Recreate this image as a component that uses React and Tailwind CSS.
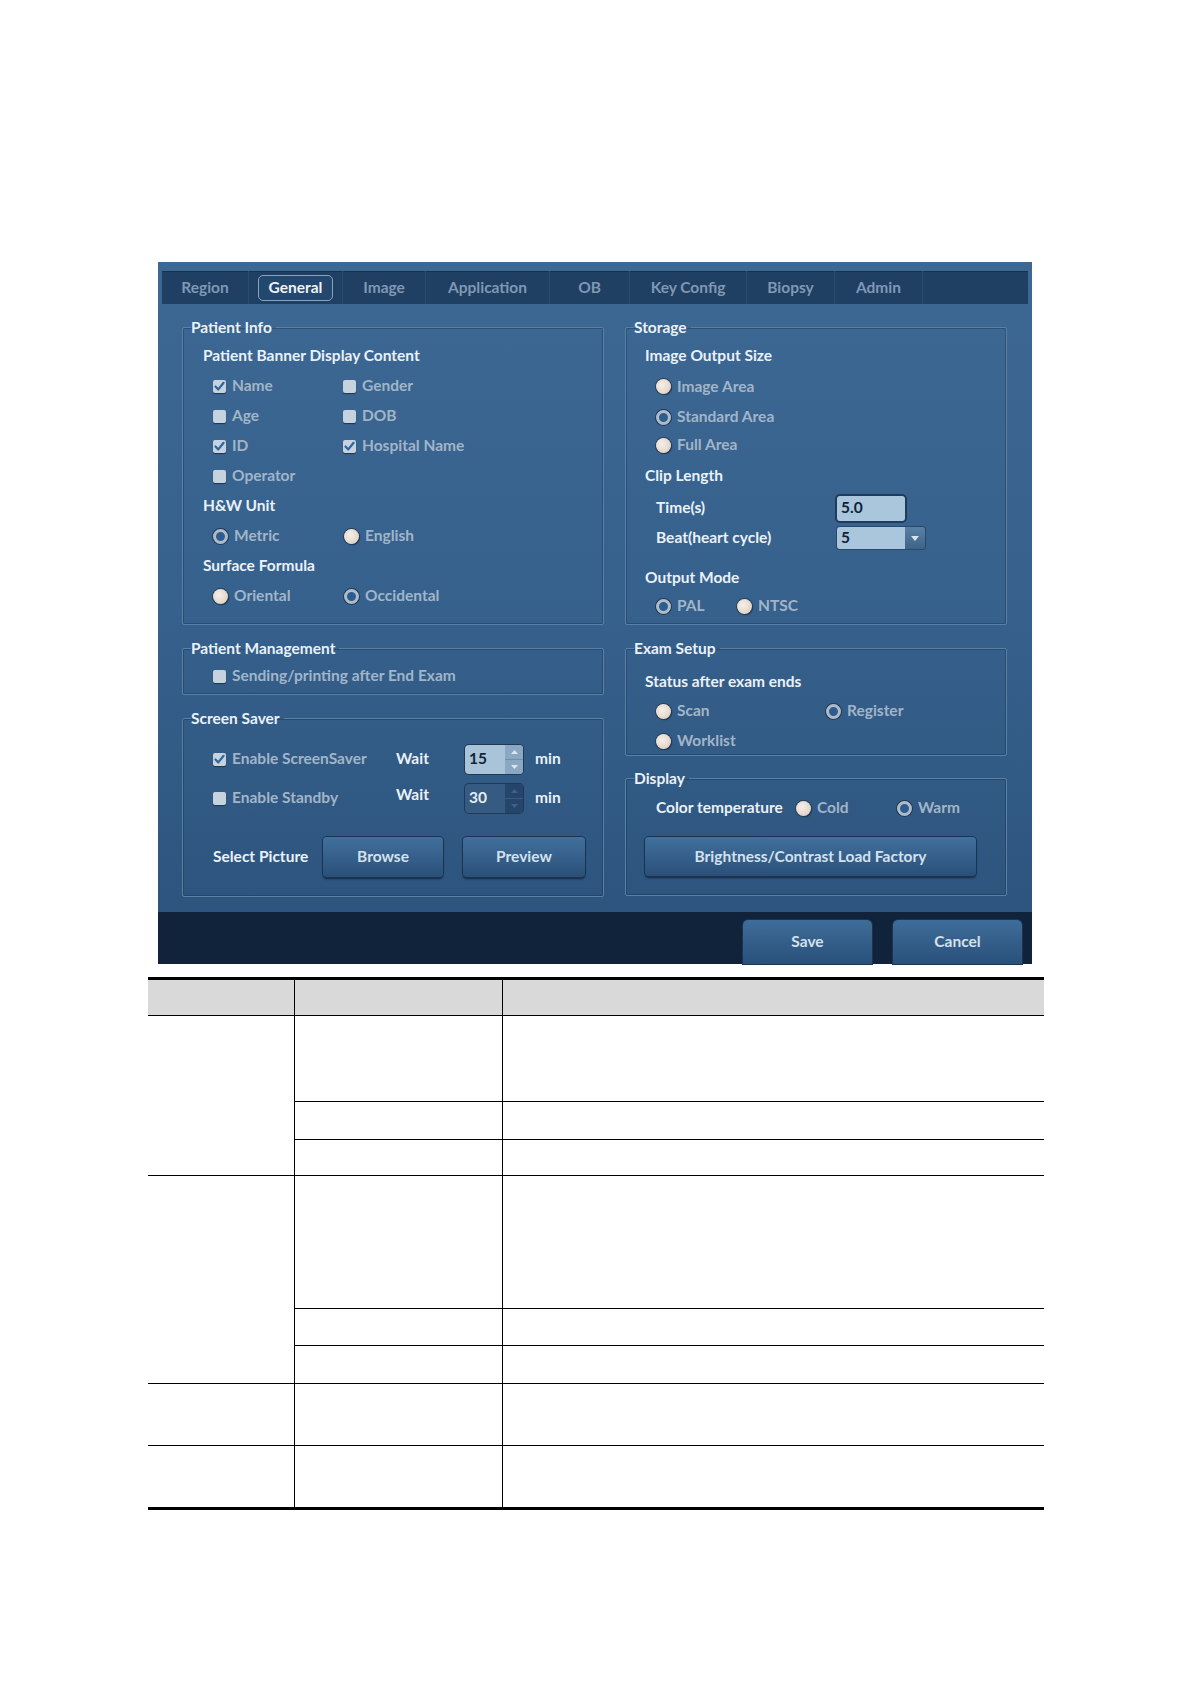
import React from 'react';

const font = { fontFamily: 'Lato, "Open Sans", sans-serif' };

const tabs = [
  { label: 'Region', w: 'w-[87px]' },
  { label: 'General', w: 'w-[94px]', active: true },
  { label: 'Image', w: 'w-[83px]' },
  { label: 'Application', w: 'w-[124px]' },
  { label: 'OB', w: 'w-[80px]' },
  { label: 'Key Config', w: 'w-[117px]' },
  { label: 'Biopsy', w: 'w-[88px]' },
  { label: 'Admin', w: 'w-[88px]' },
];

function Check({ checked, label, w = '' }) {
  return (
    <div className={`flex items-center gap-[6px] ${w}`}>
      <span className="w-[13px] h-[13px] rounded-[2px] bg-[#c6d3de] shadow-[0_1px_1px_#1d3350] flex items-center justify-center">
        {checked && (
          <svg width="11" height="11" viewBox="0 0 11 11">
            <path d="M1.5 5.5 L4.3 8.4 L9.6 1.8" fill="none" stroke="#2f64a0" strokeWidth="2.2" strokeLinecap="round" strokeLinejoin="round" />
          </svg>
        )}
      </span>
      <span className="text-[#a2b5c8] text-[15.5px] font-bold">{label}</span>
    </div>
  );
}

function Radio({ on, label, w = '' }) {
  return (
    <div className={`flex items-center gap-[6px] ${w}`}>
      {on ? (
        <span className="w-[15px] h-[15px] rounded-full bg-[#2f5c8e] border-[3px] border-[#adbccb] shadow-[0_0_0_1px_#243a52]" />
      ) : (
        <span className="w-[15px] h-[15px] rounded-full bg-[radial-gradient(circle_at_40%_40%,#f6efe8,#d9cabd)] shadow-[0_0_0_1px_#2c3f55,1px_1px_1px_#1c2d40]" />
      )}
      <span className="text-[#a2b5c8] text-[15.5px] font-bold">{label}</span>
    </div>
  );
}

function Box({ title, h, children }) {
  return (
    <fieldset className={`${h} border border-[#5a80a6] rounded-[2px] shadow-[inset_0_0_0_1px_rgba(20,40,70,0.35)]`}>
      <legend className="ml-[8px] pr-[4px] h-[20px] leading-[20px] text-[15.5px] font-bold text-[#eaf1f7]">{title}</legend>
      {children}
    </fieldset>
  );
}

const head = 'text-[15.5px] font-bold text-[#eaf1f7]';

function Btn({ children, w, h = 'h-[40px]' }) {
  return (
    <div className={`${w} ${h} rounded-[4px] bg-linear-to-b from-[#41709c] to-[#2a5079] shadow-[0_0_0_1px_#1b3452,0_2px_2px_#15283f] flex items-center justify-center text-[15.5px] font-bold text-[#d4e1ed]`}>
      {children}
    </div>
  );
}

function Spin({ value, disabled }) {
  return (
    <div className={`w-[58px] h-[29px] rounded-[4px] flex overflow-hidden shadow-[0_0_0_1px_#1f3a58] ${disabled ? 'bg-[#365b82]' : 'bg-[#a9c4d9]'}`}>
      <div className={`flex-1 flex items-center pl-[4px] text-[15.5px] font-bold ${disabled ? 'text-[#e7eef5]' : 'text-[#10243b]'}`}>{value}</div>
      <div className={`w-[18px] flex flex-col ${disabled ? 'bg-[#26456a]' : 'bg-[#8ba8c3]'}`}>
        <div className={`flex-1 flex items-center justify-center border-b ${disabled ? 'border-[#3a5b80]' : 'border-[#6f8fae]'}`}>
          <svg width="7" height="4" viewBox="0 0 7 4"><path d="M0 4 L3.5 0 L7 4 Z" fill={disabled ? '#40608a' : '#dbe6ef'} /></svg>
        </div>
        <div className="flex-1 flex items-center justify-center">
          <svg width="7" height="4" viewBox="0 0 7 4"><path d="M0 0 L3.5 4 L7 0 Z" fill={disabled ? '#40608a' : '#dbe6ef'} /></svg>
        </div>
      </div>
    </div>
  );
}

function Panel() {
  return (
    <div className="ml-[158px] w-[874px] h-[702px] flex flex-col bg-linear-to-b from-[#3c6893] via-[#36618c] to-[#2b527b]" style={font}>
      <div className="h-[9px]" />
      <div className="mx-[4px] h-[33px] flex bg-[#1f3f63] shadow-[inset_0_1px_0_#17314f]">
        {tabs.map((t) => (
          <div key={t.label} className={`${t.w} h-full flex items-center justify-center border-r border-[#2a4b70]`}>
            {t.active ? (
              <span className="w-[75px] h-[26px] rounded-[5px] border border-[#86a4c4] bg-[#24476d] flex items-center justify-center text-[15.5px] font-bold text-[#eef3f8]">
                {t.label}
              </span>
            ) : (
              <span className="text-[15.5px] font-bold text-[#7f98b3]">{t.label}</span>
            )}
          </div>
        ))}
        <div className="flex-1" />
      </div>

      <div className="flex-1 flex gap-[21px] px-[24px] pt-[13px]">
        {/* left column */}
        <div className="w-[422px] flex flex-col gap-[13px]">
          <Box title="Patient Info" h="h-[308px]">
            <div className="pl-[20px] pt-[4px]">
              <div className={`h-[30px] flex items-center ${head}`}>Patient Banner Display Content</div>
              <div className="pl-[10px]">
                <div className="h-[30px] flex items-center"><Check checked label="Name" w="w-[130px]" /><Check label="Gender" /></div>
                <div className="h-[30px] flex items-center"><Check label="Age" w="w-[130px]" /><Check label="DOB" /></div>
                <div className="h-[30px] flex items-center"><Check checked label="ID" w="w-[130px]" /><Check checked label="Hospital Name" /></div>
                <div className="h-[30px] flex items-center"><Check label="Operator" /></div>
              </div>
              <div className={`h-[30px] flex items-center ${head}`}>H&amp;W Unit</div>
              <div className="pl-[10px] h-[30px] flex items-center"><Radio on label="Metric" w="w-[131px]" /><Radio label="English" /></div>
              <div className={`h-[30px] flex items-center ${head}`}>Surface Formula</div>
              <div className="pl-[10px] h-[30px] flex items-center"><Radio label="Oriental" w="w-[131px]" /><Radio on label="Occidental" /></div>
            </div>
          </Box>

          <Box title="Patient Management" h="h-[57px]">
            <div className="pl-[30px] h-[28px] mt-[4px] flex items-center">
              <Check label="Sending/printing after End Exam" />
            </div>
          </Box>

          <Box title="Screen Saver" h="h-[189px]">
            <div className="pl-[30px] pt-[16px]">
              <div className="h-[30px] flex items-center">
                <Check checked label="Enable ScreenSaver" w="w-[183px]" />
                <span className={`w-[69px] ${head}`}>Wait</span>
                <Spin value="15" />
                <span className={`ml-[12px] ${head}`}>min</span>
              </div>
              <div className="h-[30px] mt-[9px] flex items-center">
                <Check label="Enable Standby" w="w-[183px]" />
                <span className={`w-[69px] -mt-[6px] ${head}`}>Wait</span>
                <Spin value="30" disabled />
                <span className={`ml-[12px] ${head}`}>min</span>
              </div>
              <div className="mt-[24px] flex items-center">
                <span className={`w-[110px] ${head}`}>Select Picture</span>
                <Btn w="w-[120px]">Browse</Btn>
                <div className="w-[20px]" />
                <Btn w="w-[122px]">Preview</Btn>
              </div>
            </div>
          </Box>
        </div>

        {/* right column */}
        <div className="w-[382px] flex flex-col">
          <Box title="Storage" h="h-[308px]">
            <div className="pl-[19px] pt-[4px]">
              <div className={`h-[30px] flex items-center ${head}`}>Image Output Size</div>
              <div className="pl-[11px]">
                <div className="h-[31px] flex items-center"><Radio label="Image Area" /></div>
                <div className="h-[30px] flex items-center"><Radio on label="Standard Area" /></div>
                <div className="h-[26px] flex items-center"><Radio label="Full Area" /></div>
              </div>
              <div className={`h-[36px] flex items-center ${head}`}>Clip Length</div>
              <div className="pl-[11px]">
                <div className="h-[28px] flex items-center">
                  <span className={`w-[181px] ${head}`}>Time(s)</span>
                  <div className="w-[68px] h-[25px] rounded-[3px] bg-[#a9c6dc] shadow-[0_0_0_2px_#1f3c5c] flex items-center pl-[4px] text-[15.5px] font-bold text-[#0f2238]">5.0</div>
                </div>
                <div className="h-[32px] flex items-center">
                  <span className={`w-[181px] ${head}`}>Beat(heart cycle)</span>
                  <div className="w-[88px] h-[22px] rounded-[3px] flex overflow-hidden shadow-[0_0_0_1px_#2a4868]">
                    <div className="flex-1 bg-[#a9c6dc] flex items-center pl-[4px] text-[15.5px] font-bold text-[#0f2238]">5</div>
                    <div className="w-[20px] bg-linear-to-b from-[#5a80a4] to-[#3d6389] flex items-center justify-center">
                      <svg width="8" height="5" viewBox="0 0 8 5"><path d="M0 0 L4 5 L8 0 Z" fill="#d8e3ed" /></svg>
                    </div>
                  </div>
                </div>
              </div>
              <div className={`h-[28px] mt-[10px] flex items-center ${head}`}>Output Mode</div>
              <div className="pl-[11px] h-[28px] flex items-center">
                <Radio on label="PAL" w="w-[81px]" /><Radio label="NTSC" />
              </div>
            </div>
          </Box>

          <div className="h-[13px]" />
          <Box title="Exam Setup" h="h-[118px]">
            <div className="pl-[19px] pt-[10px]">
              <div className={`h-[28px] flex items-center ${head}`}>Status after exam ends</div>
              <div className="pl-[11px]">
                <div className="h-[30px] flex items-center"><Radio label="Scan" w="w-[170px]" /><Radio on label="Register" /></div>
                <div className="h-[30px] flex items-center"><Radio label="Worklist" /></div>
              </div>
            </div>
          </Box>

          <div className="h-[12px]" />
          <Box title="Display" h="h-[128px]">
            <div className="pl-[19px] pt-[6px]">
              <div className="pl-[11px] h-[28px] flex items-center">
                <span className={`w-[140px] ${head}`}>Color temperature</span>
                <Radio label="Cold" w="w-[101px]" />
                <Radio on label="Warm" />
              </div>
              <div className="mt-[15px]">
                <Btn w="w-[331px]" h="h-[39px]">Brightness/Contrast Load Factory</Btn>
              </div>
            </div>
          </Box>
        </div>
      </div>

      <div className="h-[52px] bg-[#11233a] flex items-end justify-end pr-[10px] gap-[21px]">
        <div className="w-[129px] h-[44px] rounded-t-[5px] bg-linear-to-b from-[#3f6d99] to-[#29507a] shadow-[0_0_0_1px_#1b3452] flex items-center justify-center text-[15.5px] font-bold text-[#d4e1ed]">Save</div>
        <div className="w-[129px] h-[44px] rounded-t-[5px] bg-linear-to-b from-[#3f6d99] to-[#29507a] shadow-[0_0_0_1px_#1b3452] flex items-center justify-center text-[15.5px] font-bold text-[#d4e1ed]">Cancel</div>
      </div>
    </div>
  );
}

function DocTable() {
  const cell = 'border-black p-0';
  return (
    <table className="ml-[148px] mt-[13px] w-[896px] border-collapse border-t-[3px] border-b-[3px] border-black">
      <tbody>
        <tr className="h-[37px] bg-[#d9d9d9]">
          <td className={`w-[146px] border-b ${cell}`} />
          <td className={`w-[208px] border-b border-l ${cell}`} />
          <td className={`border-b border-l ${cell}`} />
        </tr>
        <tr className="h-[86px]">
          <td rowSpan={3} className={`border-b ${cell}`} />
          <td className={`border-b border-l ${cell}`} />
          <td className={`border-b border-l ${cell}`} />
        </tr>
        <tr className="h-[38px]">
          <td className={`border-b border-l ${cell}`} />
          <td className={`border-b border-l ${cell}`} />
        </tr>
        <tr className="h-[36px]">
          <td className={`border-b border-l ${cell}`} />
          <td className={`border-b border-l ${cell}`} />
        </tr>
        <tr className="h-[133px]">
          <td rowSpan={3} className={`border-b ${cell}`} />
          <td className={`border-b border-l ${cell}`} />
          <td className={`border-b border-l ${cell}`} />
        </tr>
        <tr className="h-[37px]">
          <td className={`border-b border-l ${cell}`} />
          <td className={`border-b border-l ${cell}`} />
        </tr>
        <tr className="h-[38px]">
          <td className={`border-b border-l ${cell}`} />
          <td className={`border-b border-l ${cell}`} />
        </tr>
        <tr className="h-[62px]">
          <td className={`border-b ${cell}`} />
          <td className={`border-b border-l ${cell}`} />
          <td className={`border-b border-l ${cell}`} />
        </tr>
        <tr className="h-[63px]">
          <td className={cell} />
          <td className={`border-l ${cell}`} />
          <td className={`border-l ${cell}`} />
        </tr>
      </tbody>
    </table>
  );
}

export default function App() {
  return (
    <div className="w-[1190px] min-h-[1684px] bg-white pt-[262px]">
      <Panel />
      <DocTable />
    </div>
  );
}
